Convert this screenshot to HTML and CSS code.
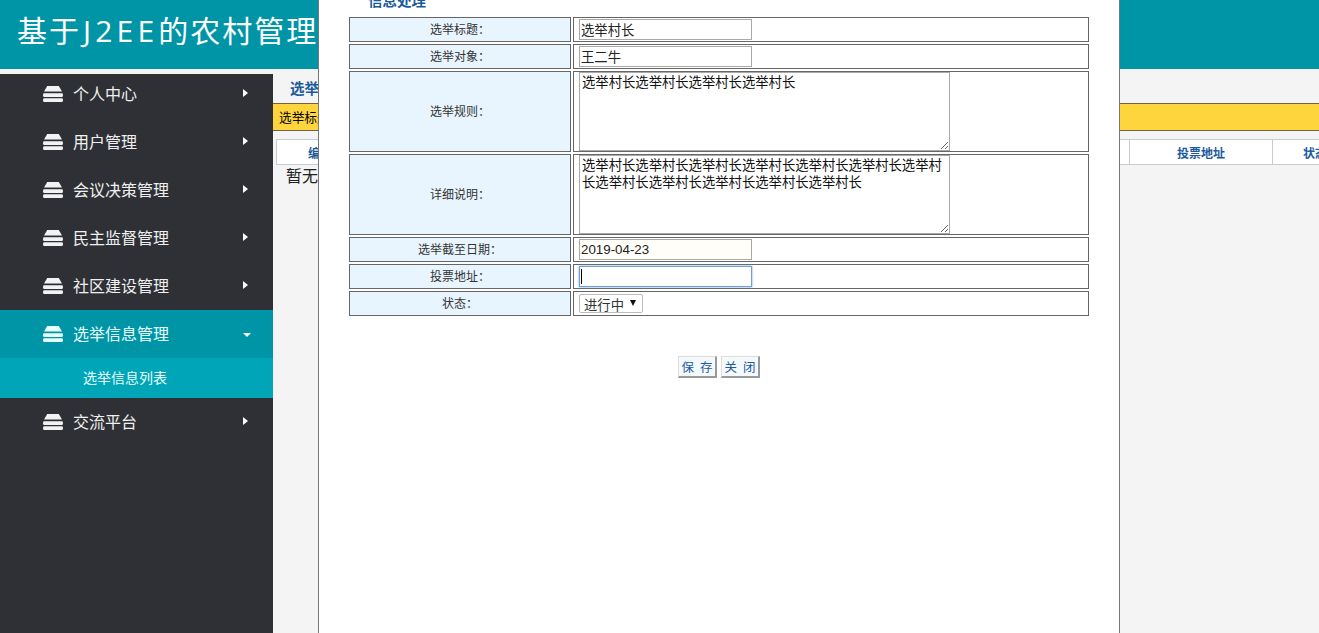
FILE: index.html
```html
<!DOCTYPE html>
<html lang="zh-CN">
<head>
<meta charset="utf-8">
<title>基于J2EE的农村管理</title>
<link rel="stylesheet" href="styles.css">
</head>
<body>
<svg class="defs" width="0" height="0" aria-hidden="true">
  <symbol id="stack" viewBox="0 0 20 16">
    <path d="M4.2 0H15.8L19 5.6H1Z"/>
    <path d="M.8 7.3H19.2Q20 7.6 20 9.1Q20 10.6 19.2 10.9H.8Q0 10.6 0 9.1Q0 7.6 .8 7.3Z"/>
    <path d="M.8 12.2H19.2Q20 12.5 20 14.1Q20 15.7 19.2 16H.8Q0 15.7 0 14.1Q0 12.5 .8 12.2Z"/>
  </symbol>
</svg>
<header class="topbar"><h1 class="brand">基于<span class="brand-latin">J2EE</span>的农村管理</h1></header>
<div class="workspace">
  <nav class="sidebar">
    <a class="nav-item"><svg class="nav-icon"><use href="#stack"/></svg><span class="nav-label">个人中心</span><i class="arrow-right"></i></a>
    <a class="nav-item"><svg class="nav-icon"><use href="#stack"/></svg><span class="nav-label">用户管理</span><i class="arrow-right"></i></a>
    <a class="nav-item"><svg class="nav-icon"><use href="#stack"/></svg><span class="nav-label">会议决策管理</span><i class="arrow-right"></i></a>
    <a class="nav-item"><svg class="nav-icon"><use href="#stack"/></svg><span class="nav-label">民主监督管理</span><i class="arrow-right"></i></a>
    <a class="nav-item"><svg class="nav-icon"><use href="#stack"/></svg><span class="nav-label">社区建设管理</span><i class="arrow-right"></i></a>
    <a class="nav-item is-open"><svg class="nav-icon"><use href="#stack"/></svg><span class="nav-label">选举信息管理</span><i class="arrow-down"></i></a>
    <a class="nav-sub">选举信息列表</a>
    <a class="nav-item"><svg class="nav-icon"><use href="#stack"/></svg><span class="nav-label">交流平台</span><i class="arrow-right"></i></a>
  </nav>
  <main class="content">
    <h2 class="page-title">选举</h2>
    <div class="search-bar">选举标题</div>
    <div class="list-head">
      <div class="th th-first">编号</div>
      <div class="th th-address">投票地址</div>
      <div class="th th-status">状态</div>
    </div>
    <p class="empty">暂无</p>
  </main>
</div>

<section class="dialog">
  <h3 class="dialog-title">信息处理</h3>
  <div class="form">
    <div class="row"><div class="label">选举标题：</div><div class="value"><input class="field" type="text" value="选举村长"></div></div>
    <div class="row"><div class="label">选举对象：</div><div class="value"><input class="field" type="text" value="王二牛"></div></div>
    <div class="row row-tall"><div class="label">选举规则：</div><div class="value"><textarea class="area">选举村长选举村长选举村长选举村长</textarea></div></div>
    <div class="row row-tall"><div class="label">详细说明：</div><div class="value"><textarea class="area">选举村长选举村长选举村长选举村长选举村长选举村长选举村长选举村长选举村长选举村长选举村长选举村长</textarea></div></div>
    <div class="row"><div class="label">选举截至日期：</div><div class="value"><input class="field field-date" type="text" value="2019-04-23"></div></div>
    <div class="row"><div class="label">投票地址：</div><div class="value"><span class="focus-wrap"><input class="field is-focused" type="text"><i class="caret"></i></span></div></div>
    <div class="row"><div class="label">状态：</div><div class="value"><span class="select-wrap"><select class="select"><option>进行中</option></select></span></div></div>
  </div>
  <div class="actions">
    <button class="btn" type="button">保 存</button>
    <button class="btn" type="button">关 闭</button>
  </div>
</section>
</body>
</html>
```
FILE: styles.css
```css
* { box-sizing: border-box; }
html, body { height: 100%; }
body {
  margin: 0;
  overflow: hidden;
  background: #f4f4f4;
  font-family: "Liberation Sans", "Noto Sans CJK SC", sans-serif;
  display: flex;
  flex-direction: column;
}
.defs { position: absolute; }

.topbar {
  height: 69px;
  flex: none;
  background: #0095a6;
  display: flex;
  align-items: center;
  padding: 0 0 8px 17px;
}
.brand {
  margin: 0;
  font: 400 30px/40px "Open Sans", "Noto Sans CJK SC", sans-serif;
  letter-spacing: 2px;
  color: #fff;
  white-space: nowrap;
}
.brand-latin { margin-left: 2px; letter-spacing: 4.2px; }

.workspace { flex: 1; display: flex; min-height: 0; padding-top: 5px; }

.sidebar {
  width: 273px;
  flex: none;
  background: #2f3036;
  display: flex;
  flex-direction: column;
}
.nav-item {
  height: 48px;
  flex: none;
  display: flex;
  align-items: center;
  padding-left: 43px;
  color: #f0f0f0;
  font-size: 16px;
}
.nav-item:first-child { height: 44px; padding-bottom: 4px; }
.nav-icon { width: 20px; height: 16px; fill: #f2f2f2; margin: -1px 10px 0 0; flex: none; }
.nav-label { width: 170px; margin-bottom: 2px; font-family: "Noto Sans CJK SC", sans-serif; }
.arrow-right {
  margin-top: -2px;
  border-left: 5.5px solid #fff;
  border-top: 4.5px solid transparent;
  border-bottom: 4.5px solid transparent;
}
.arrow-down {
  margin-top: 1px;
  border-top: 4px solid #fff;
  border-left: 4.5px solid transparent;
  border-right: 4.5px solid transparent;
}
.is-open { background: #0095a6; color: #e6ffff; }
.is-open .nav-icon { fill: #e8ffff; }
.nav-sub {
  height: 40px;
  flex: none;
  background: #00a5b8;
  color: #e6ffff;
  font: 14px/38px "Noto Sans CJK SC", sans-serif;
  padding-left: 83px;
}

.content { flex: 1; min-width: 0; overflow: hidden; }
.page-title {
  margin: 4px 0 0 17px;
  height: 25px;
  font: 700 14.5px/20px "Noto Sans CJK SC", sans-serif;
  color: #1c5a9c;
}
.search-bar {
  height: 28px;
  background: #ffd53d;
  border-top: 1px solid #6e6440;
  border-bottom: 1px solid #6e6440;
  padding-left: 6px;
  font: 12.7px/26px "Noto Sans CJK SC", sans-serif;
  color: #000;
}
.list-head {
  margin: 8px 0 0 3px;
  height: 26px;
  width: 1100px;
  display: flex;
  background: #fff;
  border: 1px solid #c5ccd4;
}
.th {
  flex: none;
  font: 700 12px/26px "Noto Sans CJK SC", sans-serif;
  color: #1c5a9c;
  text-align: center;
  border-right: 1px solid #c5ccd4;
}
.th-first { width: 853px; text-align: left; padding-left: 31px; }
.th-address { width: 143px; }
.th-status { width: 84px; border-right: 0; }
.empty {
  margin: -1px 0 0 13px;
  font: 16px/22px "Noto Sans CJK SC", sans-serif;
  color: #222;
}

.dialog {
  position: absolute;
  top: 0;
  left: 318px;
  width: 802px;
  height: 100%;
  overflow: hidden;
  background: #fff;
  border-left: 1px solid #777;
  border-right: 1px solid #777;
  padding-left: 30px;
}
.dialog-title {
  margin: -10px 0 7px 19px;
  font: 700 14.5px/20px "Noto Sans CJK SC", sans-serif;
  color: #1c5a9c;
}
.form { width: 740px; display: flex; flex-direction: column; gap: 2px; }
.row { display: grid; grid-template-columns: 222px 516px; gap: 2px; height: 25px; }
.row-tall { height: 81px; }
.label, .value { border: 1px solid #666; }
.label {
  background: #e8f5fe;
  font: 12px/1 "Noto Sans CJK SC", sans-serif;
  color: #333;
  display: flex;
  align-items: center;
  justify-content: center;
  padding-bottom: 2px;
}
.value { display: flex; align-items: center; padding-left: 5px; background: #fff; }
.field {
  display: block;
  width: 173px;
  height: 21px;
  margin: 0;
  padding: 0 2px 1px 1px;
  border: 1px solid #a9a9a9;
  background: #fff;
  color: #222;
  outline: 0;
  font: 13.33px/18px "Liberation Sans", "Noto Sans CJK SC", sans-serif;
}
.field-date { background: #fffef8; }
.is-focused {
  border-color: #6f9fd8;
  box-shadow: 0 0 2px 0 #6f9fd8;
}
.focus-wrap { position: relative; display: block; }
.caret {
  position: absolute;
  left: 2px;
  top: 3px;
  width: 1px;
  height: 15px;
  background: #000;
}
.area {
  display: block;
  width: 371px;
  height: 79px;
  margin: 0;
  padding: 1px 2px;
  border: 1px solid #a9a9a9;
  outline: 0;
  color: #111;
  font: 13.33px/16.5px "Noto Sans CJK SC", sans-serif;
  word-break: break-all;
  overflow: auto;
}
.select-wrap { position: relative; display: block; }
.select-wrap::after {
  content: "";
  position: absolute;
  right: 7px;
  top: 6px;
  border-top: 6px solid #111;
  border-left: 3px solid transparent;
  border-right: 3px solid transparent;
  pointer-events: none;
}
.select {
  display: block;
  appearance: none;
  width: 64px;
  height: 19px;
  margin: 0;
  padding: 2px 0 0 4px;
  border: 1px solid #bbb;
  border-radius: 2px;
  background: #fff;
  color: #333;
  font: 13.33px/16px "Noto Sans CJK SC", sans-serif;
}

.actions { margin-top: 40px; width: 740px; display: flex; justify-content: center; gap: 4px; }
.btn {
  width: 39px;
  height: 22px;
  padding: 0;
  background: #f4f9fc;
  border: 1px solid #ddd;
  border-right: 2px solid #999;
  border-bottom: 2px solid #999;
  color: #1c5a9c;
  word-spacing: 3px;
  font: 12.5px/18px "Noto Sans CJK SC", sans-serif;
}
```
